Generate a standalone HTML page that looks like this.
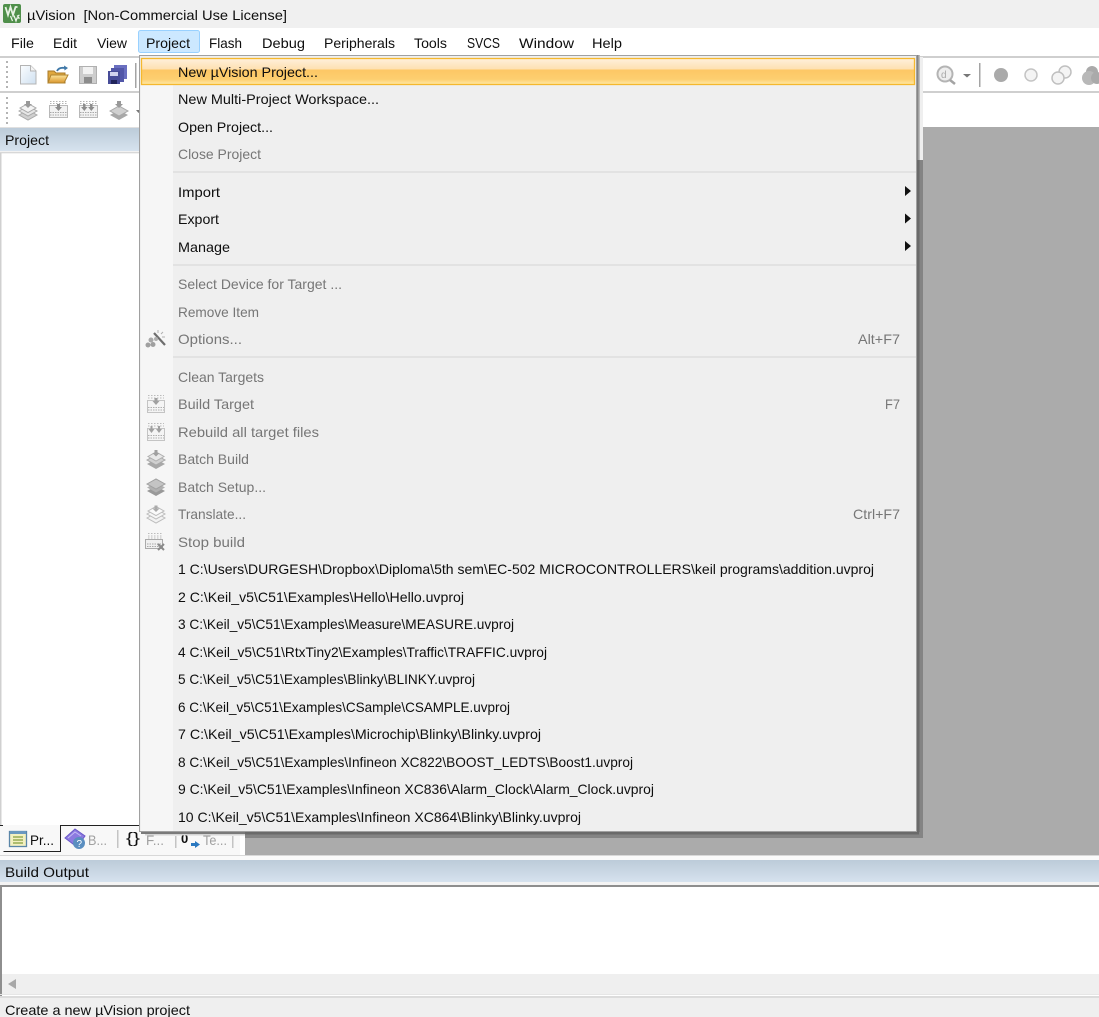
<!DOCTYPE html>
<html lang="en"><head><meta charset="utf-8"><title>µVision</title>
<style>
html,body{margin:0;padding:0;background:#fff;width:1099px;height:1017px;overflow:hidden}
svg{display:block;filter:blur(.35px)}
text{font-family:"Liberation Sans",sans-serif;font-size:14px;fill:#0e0e0e}
.d{fill:#767676}
</style></head><body>
<svg xmlns="http://www.w3.org/2000/svg" width="1099" height="1017" viewBox="0 0 1099 1017">
<defs>
<linearGradient id="hd" x1="0" y1="0" x2="0" y2="1"><stop offset="0" stop-color="#bccbd9"/><stop offset="1" stop-color="#d6e2ee"/></linearGradient>
<linearGradient id="hl" x1="0" y1="0" x2="0" y2="1"><stop offset="0" stop-color="#fff0dc"/><stop offset=".42" stop-color="#fee0b0"/><stop offset=".43" stop-color="#fdc765"/><stop offset=".8" stop-color="#fdcf70"/><stop offset="1" stop-color="#ffe9a8"/></linearGradient>
<linearGradient id="fold" x1="0" y1="0" x2="0" y2="1"><stop offset="0" stop-color="#fde59a"/><stop offset="1" stop-color="#d9952c"/></linearGradient>
<linearGradient id="doc" x1="0" y1="0" x2="1" y2="1"><stop offset="0" stop-color="#fbfdff"/><stop offset="1" stop-color="#cfe0f0"/></linearGradient>
</defs>
<!-- base -->
<rect width="1099" height="1017" fill="#fff"/>
<rect width="1099" height="28" fill="#f0f0f0"/>
<!-- title -->
<rect x="3" y="4" width="18" height="19" rx="2" fill="#4f8f4a"/>
<path d="M5.500 7l2.500 8 2.500-8 2.500 8 2.500-8 2 0" fill="none" stroke="#e8f2e4" stroke-width="1.800"/>
<path d="M12.500 21l-2-5M14 15.500l2 5.500 1-3h2l-1.500-2 2-1" fill="none" stroke="#f0f6ee" stroke-width="1.200"/>
<text x="27" y="20" textLength="260" lengthAdjust="spacingAndGlyphs" xml:space="preserve">µVision  [Non-Commercial Use License]</text>
<!-- menubar -->
<rect x="138.500" y="30.500" width="61" height="22" rx="2" fill="#cce8ff" stroke="#99d1ff"/>
<text x="11" y="48" textLength="23" lengthAdjust="spacingAndGlyphs">File</text>
<text x="53" y="48" textLength="24" lengthAdjust="spacingAndGlyphs">Edit</text>
<text x="97" y="48" textLength="30" lengthAdjust="spacingAndGlyphs">View</text>
<text x="146" y="48" textLength="44" lengthAdjust="spacingAndGlyphs">Project</text>
<text x="209" y="48" textLength="33" lengthAdjust="spacingAndGlyphs">Flash</text>
<text x="262" y="48" textLength="43" lengthAdjust="spacingAndGlyphs">Debug</text>
<text x="324" y="48" textLength="71" lengthAdjust="spacingAndGlyphs">Peripherals</text>
<text x="414" y="48" textLength="33" lengthAdjust="spacingAndGlyphs">Tools</text>
<text x="467" y="48" textLength="33" lengthAdjust="spacingAndGlyphs" style="font-size:15px">SVCS</text>
<text x="519" y="48" textLength="55" lengthAdjust="spacingAndGlyphs">Window</text>
<text x="592" y="48" textLength="30" lengthAdjust="spacingAndGlyphs">Help</text>
<!-- toolbars -->
<rect x="0" y="56" width="1099" height="2" fill="#cfcfcf"/>
<rect x="0" y="91" width="1099" height="2" fill="#cfcfcf"/>
<g fill="#b4b4b4">
<rect x="6" y="61" width="2" height="2"/><rect x="6" y="66" width="2" height="2"/><rect x="6" y="71" width="2" height="2"/><rect x="6" y="76" width="2" height="2"/><rect x="6" y="81" width="2" height="2"/><rect x="6" y="86" width="2" height="2"/>
<rect x="6" y="97" width="2" height="2"/><rect x="6" y="102" width="2" height="2"/><rect x="6" y="107" width="2" height="2"/><rect x="6" y="112" width="2" height="2"/><rect x="6" y="117" width="2" height="2"/><rect x="6" y="122" width="2" height="2"/>
</g>
<!-- toolbar 1 icons -->
<path d="M20.500 65.500h10l5.500 5.500v13h-15.500z" fill="url(#doc)" stroke="#b4b4b4"/>
<path d="M30.500 65.500v5.500h5.500" fill="#f4f4f4" stroke="#b4b4b4"/>
<path d="M48 83V71h6l2 2h9v10z" fill="#e0a83e" stroke="#a87a28"/>
<path d="M48 83l3-8h17l-4 8z" fill="url(#fold)" stroke="#b08430"/>
<path d="M57 71q2-4 8-3" fill="none" stroke="#3f78a8" stroke-width="1.800"/><path d="M64 65.500l4 2.500-3.500 2.500z" fill="#3f78a8"/>
<rect x="79.500" y="66.500" width="17" height="17" fill="#cdcdcd" stroke="#b0b0b0"/><rect x="83" y="67" width="10" height="7" fill="#f2f2f2"/><rect x="84" y="77" width="8" height="6" fill="#8c8c8c"/>
<rect x="114" y="65" width="13" height="14" fill="#6a6fc0"/><rect x="111" y="68" width="13" height="14" fill="#5257a8"/><rect x="108" y="71" width="12" height="13" fill="#474c98"/><rect x="110" y="72" width="8" height="4" fill="#d0d2ee"/><rect x="111" y="80" width="6" height="4" fill="#20245a"/>
<rect x="135" y="63" width="1.500" height="25" fill="#a4a4a4"/>
<!-- toolbar 2 icons -->
<g>
<path d="M19 115l9-5 9 5-9 5z" fill="#d0d0d0" stroke="#aaa"/><path d="M19 111l9-5 9 5-9 5z" fill="#e6e6e6" stroke="#aaa"/><path d="M20 108l8-4.500 8 4.500-8 4.500z" fill="#f4f4f4" stroke="#aaa"/><path d="M26 101h4v3h2l-4 4-4-4h2z" fill="#999"/>
</g>
<g id="bt2">
<rect x="49.500" y="105.500" width="18" height="12" fill="#f2f2f2" stroke="#b8b8b8"/>
<path d="M50 101.500h17M50 103.500h17" stroke="#b4b4b4" stroke-dasharray="1.500 1.500" fill="none"/>
<path d="M50 112.500h17M50 115h17" stroke="#a8a8a8" stroke-dasharray="1.500 1" fill="none"/>
<path d="M57 104h3v3h2l-3.500 4-3.500-4h2z" fill="#8c8c8c"/>
</g>
<g>
<rect x="79.500" y="105.500" width="18" height="12" fill="#f2f2f2" stroke="#b8b8b8"/>
<path d="M80 101.500h17M80 103.500h17" stroke="#b4b4b4" stroke-dasharray="1.500 1.500" fill="none"/>
<path d="M80 112.500h17M80 115h17" stroke="#a8a8a8" stroke-dasharray="1.500 1" fill="none"/>
<path d="M83 104h2.500v3h2l-3.200 4-3.200-4h2zM90 104h2.500v3h2l-3.200 4-3.200-4h2z" fill="#8c8c8c"/>
</g>
<path d="M110 115l9-5 9 5-9 5z" fill="#a8a8a8"/><path d="M110 111l9-5 9 5-9 5z" fill="#d0d0d0" stroke="#a8a8a8"/><path d="M117 101h4v3h2l-4 4-4-4h2z" fill="#999"/>
<path d="M136 110h5l-2.500 3z" fill="#777"/>
<!-- right toolbar icons -->
<circle cx="945" cy="74" r="7.500" fill="#eee" stroke="#b4b4b4" stroke-width="2"/>
<text x="941" y="78" style="font-size:10px;fill:#aaa">d</text>
<path d="M950 80l5 4" stroke="#a4a4a4" stroke-width="2.500"/>
<path d="M963 74h8l-4 3.500z" fill="#777"/>
<rect x="979" y="63" width="1.500" height="24" fill="#a4a4a4"/>
<circle cx="1001" cy="75" r="7" fill="#aaa"/>
<circle cx="1031" cy="75" r="6" fill="#f4f4f4" stroke="#c4c4c4" stroke-width="1.500"/>
<circle cx="1065" cy="72" r="6" fill="#f4f4f4" stroke="#c0c0c0" stroke-width="1.500"/><circle cx="1058" cy="78" r="6" fill="#f4f4f4" stroke="#c0c0c0" stroke-width="1.500"/>
<circle cx="1092" cy="72" r="6" fill="#aaa"/><circle cx="1089" cy="78" r="7" fill="#b8b8b8"/><circle cx="1097" cy="78" r="6" fill="#aaa"/>
<!-- gray client -->
<rect x="923" y="127" width="176" height="728" fill="#ababab"/>
<rect x="245" y="825" width="700" height="30" fill="#ababab"/>
<!-- project panel -->
<rect x="0" y="127" width="139" height="1" fill="#e0e0e0"/>
<rect x="0" y="128" width="139" height="23" fill="url(#hd)"/>
<text x="5" y="145" textLength="44" lengthAdjust="spacingAndGlyphs">Project</text>
<rect x="0" y="151" width="139" height="3" fill="#f2f2f2"/>
<rect x="0" y="152" width="139" height="1" fill="#d8d8d8"/>
<rect x="0" y="153" width="1.500" height="672" fill="#d0d0d0"/>
<rect x="0" y="825" width="240" height="30" fill="#f8f8f8"/>
<!-- tabs -->
<path d="M3.500 851.500H60.500V825.500H139" fill="none" stroke="#222"/>
<path d="M0 825.500h3" stroke="#222"/>
<rect x="9.500" y="831.500" width="17" height="15" fill="#f3f0c0" stroke="#5a86a8" stroke-width="1.300"/><rect x="10" y="831" width="16" height="3" fill="#6a98c0"/><path d="M13 837h10M13 840h10M13 843h10" stroke="#6a8a20"/>
<text x="30" y="845" textLength="24" lengthAdjust="spacingAndGlyphs">Pr...</text>
<path d="M65 838l10-9 10 7-8 11z" fill="#8c7ae0" stroke="#6a58c8"/><path d="M68 838l7-6 6 4" fill="none" stroke="#c4baf4"/><circle cx="79" cy="843" r="6" fill="#5a8ec0"/><text x="76.500" y="847" style="font-size:10px;fill:#fff">?</text>
<text x="88" y="845" textLength="19" lengthAdjust="spacingAndGlyphs" style="fill:#a0a0a0">B...</text>
<rect x="117" y="830" width="1.500" height="18" fill="#c4c4c4"/>
<text x="126" y="843" textLength="14" lengthAdjust="spacingAndGlyphs" style="font-size:15px">{}</text>
<text x="146" y="845" textLength="18" lengthAdjust="spacingAndGlyphs" style="fill:#a0a0a0">F...</text>
<rect x="175" y="836" width="1.500" height="12" fill="#c4c4c4"/>
<text x="181" y="843" style="font-size:13px;font-weight:bold">0</text>
<path d="M191 843h4v-2l5 3.500-5 3.500v-2h-4z" fill="#2a78c0"/>
<text x="203" y="845" textLength="24" lengthAdjust="spacingAndGlyphs" style="fill:#a0a0a0">Te...</text>
<rect x="232" y="836" width="1.500" height="12" fill="#c4c4c4"/>
<!-- menu shadow -->
<rect x="917" y="160" width="6" height="678" fill="#848484"/>
<rect x="917" y="160" width="2.500" height="674" fill="#6a6a6a"/>
<rect x="917" y="55" width="1.500" height="105" fill="#858585"/>
<rect x="918.500" y="55" width="1.500" height="105" fill="#bdbdbd"/>
<rect x="920" y="57" width="3" height="103" fill="#efefef"/>
<rect x="245" y="832" width="678" height="6" fill="#848484"/>
<rect x="245" y="832" width="674" height="2.500" fill="#6a6a6a"/>
<rect x="141" y="832" width="104" height="2" fill="#7a7a7a"/>
<rect x="145" y="834" width="100" height="1.500" fill="#d4d4d4"/>
<!-- menu -->
<rect x="139" y="55" width="778" height="777" fill="#efefef"/>
<rect x="139.500" y="55.500" width="777" height="776" fill="none" stroke="#a0a0a0"/>
<rect x="141" y="85" width="32" height="746" fill="#f6f6f6"/>
<rect x="141.500" y="58.500" width="773" height="26" fill="url(#hl)" stroke="#f5b82e" stroke-width="1.300"/>
<g fill="#e2e2e2"><rect x="173" y="171" width="743" height="2"/><rect x="173" y="264" width="743" height="2"/><rect x="173" y="356" width="743" height="2"/></g>
<text x="178" y="77" textLength="140" lengthAdjust="spacingAndGlyphs">New µVision Project...</text>
<text x="178" y="104" textLength="201" lengthAdjust="spacingAndGlyphs">New Multi-Project Workspace...</text>
<text x="178" y="132" textLength="95" lengthAdjust="spacingAndGlyphs">Open Project...</text>
<text x="178" y="159" textLength="83" lengthAdjust="spacingAndGlyphs" class="d">Close Project</text>
<text x="178" y="197" textLength="42" lengthAdjust="spacingAndGlyphs">Import</text>
<text x="178" y="224" textLength="41" lengthAdjust="spacingAndGlyphs">Export</text>
<text x="178" y="252" textLength="52" lengthAdjust="spacingAndGlyphs">Manage</text>
<path d="M905 186l6 5-6 5zM905 213.500l6 5-6 5zM905 241l6 5-6 5z" fill="#111"/>
<text x="178" y="289" textLength="164" lengthAdjust="spacingAndGlyphs" class="d">Select Device for Target ...</text>
<text x="178" y="317" textLength="81" lengthAdjust="spacingAndGlyphs" class="d">Remove Item</text>
<text x="178" y="344" textLength="64" lengthAdjust="spacingAndGlyphs" class="d">Options...</text>
<text x="858" y="344" textLength="42" lengthAdjust="spacingAndGlyphs" class="d">Alt+F7</text>
<text x="178" y="382" textLength="86" lengthAdjust="spacingAndGlyphs" class="d">Clean Targets</text>
<text x="178" y="409" textLength="76" lengthAdjust="spacingAndGlyphs" class="d">Build Target</text>
<text x="885" y="409" textLength="15" lengthAdjust="spacingAndGlyphs" class="d">F7</text>
<text x="178" y="437" textLength="141" lengthAdjust="spacingAndGlyphs" class="d">Rebuild all target files</text>
<text x="178" y="464" textLength="71" lengthAdjust="spacingAndGlyphs" class="d">Batch Build</text>
<text x="178" y="492" textLength="88" lengthAdjust="spacingAndGlyphs" class="d">Batch Setup...</text>
<text x="178" y="519" textLength="68" lengthAdjust="spacingAndGlyphs" class="d">Translate...</text>
<text x="853" y="519" textLength="47" lengthAdjust="spacingAndGlyphs" class="d">Ctrl+F7</text>
<text x="178" y="547" textLength="67" lengthAdjust="spacingAndGlyphs" class="d">Stop build</text>
<text x="178" y="574" textLength="696" lengthAdjust="spacingAndGlyphs">1 C:\Users\DURGESH\Dropbox\Diploma\5th sem\EC-502 MICROCONTROLLERS\keil programs\addition.uvproj</text>
<text x="178" y="602" textLength="286" lengthAdjust="spacingAndGlyphs">2 C:\Keil_v5\C51\Examples\Hello\Hello.uvproj</text>
<text x="178" y="629" textLength="336" lengthAdjust="spacingAndGlyphs">3 C:\Keil_v5\C51\Examples\Measure\MEASURE.uvproj</text>
<text x="178" y="657" textLength="369" lengthAdjust="spacingAndGlyphs">4 C:\Keil_v5\C51\RtxTiny2\Examples\Traffic\TRAFFIC.uvproj</text>
<text x="178" y="684" textLength="297" lengthAdjust="spacingAndGlyphs">5 C:\Keil_v5\C51\Examples\Blinky\BLINKY.uvproj</text>
<text x="178" y="712" textLength="332" lengthAdjust="spacingAndGlyphs">6 C:\Keil_v5\C51\Examples\CSample\CSAMPLE.uvproj</text>
<text x="178" y="739" textLength="363" lengthAdjust="spacingAndGlyphs">7 C:\Keil_v5\C51\Examples\Microchip\Blinky\Blinky.uvproj</text>
<text x="178" y="767" textLength="455" lengthAdjust="spacingAndGlyphs">8 C:\Keil_v5\C51\Examples\Infineon XC822\BOOST_LEDTS\Boost1.uvproj</text>
<text x="178" y="794" textLength="476" lengthAdjust="spacingAndGlyphs">9 C:\Keil_v5\C51\Examples\Infineon XC836\Alarm_Clock\Alarm_Clock.uvproj</text>
<text x="178" y="822" textLength="403" lengthAdjust="spacingAndGlyphs">10 C:\Keil_v5\C51\Examples\Infineon XC864\Blinky\Blinky.uvproj</text>
<!-- menu icons -->
<path d="M154 333l11 12" stroke="#6e6e6e" stroke-width="2.200"/>
<circle cx="148" cy="345" r="2.500" fill="#a0a0a0"/><circle cx="153" cy="344.500" r="2.500" fill="#a0a0a0"/><circle cx="151" cy="340" r="2.500" fill="#a8a8a8"/><circle cx="156" cy="339" r="2" fill="#b0b0b0"/>
<path d="M158 330v3M163 332l-2 2M165 337h-3" stroke="#b0b0b0"/>
<!-- build target -->
<rect x="147.500" y="400.500" width="17" height="12" fill="#f4f4f4" stroke="#c4c4c4"/>
<path d="M148 395.500h16M148 398h16" stroke="#bcbcbc" stroke-dasharray="1.500 1.500" fill="none"/>
<path d="M148 407.500h16M148 410h16" stroke="#b0b0b0" stroke-dasharray="1.500 1" fill="none"/>
<path d="M154.500 398h3v3h2l-3.500 4-3.500-4h2z" fill="#a0a0a0"/>
<!-- rebuild -->
<rect x="147.500" y="428.500" width="17" height="12" fill="#f4f4f4" stroke="#c4c4c4"/>
<path d="M148 423.500h16M148 426h16" stroke="#bcbcbc" stroke-dasharray="1.500 1.500" fill="none"/>
<path d="M148 435.500h16M148 438h16" stroke="#b0b0b0" stroke-dasharray="1.500 1" fill="none"/>
<path d="M150.500 426h2v3h2l-3 4-3-4h2zM158 426h2v3h2l-3 4-3-4h2z" fill="#a0a0a0"/>
<!-- batch build -->
<path d="M147 464l9-5 9 5-9 5z" fill="#a8a8a8"/><path d="M147 460l9-5 9 5-9 5z" fill="#d0d0d0" stroke="#a8a8a8"/><path d="M148 456.500l8-4.500 8 4.500-8 4.500z" fill="#e8e8e8" stroke="#b0b0b0"/><path d="M154.500 450h3v3h2l-3.500 3.500-3.500-3.500h2z" fill="#a0a0a0"/>
<!-- batch setup -->
<path d="M147 491l9-5 9 5-9 5z" fill="#999"/><path d="M147 487.500l9-5 9 5-9 5z" fill="#b0b0b0"/><path d="M147 484l9-5 9 5-9 5z" fill="#c4c4c4" stroke="#a0a0a0"/>
<!-- translate -->
<path d="M147 518l9-5 9 5-9 5z" fill="#f2f2f2" stroke="#bcbcbc"/><path d="M147 514l9-5 9 5-9 5z" fill="#f6f6f6" stroke="#bcbcbc"/><path d="M148 511l8-4.500 8 4.500-8 4.500z" fill="#fafafa" stroke="#bcbcbc"/><path d="M154.500 505.500h3v3h2l-3.500 3.500-3.500-3.500h2z" fill="#aaa"/>
<!-- stop -->
<rect x="145.500" y="539.500" width="17" height="9" fill="#f0f0f0" stroke="#aaa"/>
<path d="M148 533.500h14M148 536h14M148 538h14" stroke="#bcbcbc" stroke-dasharray="1.500 1.500" fill="none"/>
<path d="M147 544h14M147 546.500h14" stroke="#a8a8a8" stroke-dasharray="1.500 1" fill="none"/>
<path d="M158 544l6 6M164 544l-6 6" stroke="#8a8a8a" stroke-width="2"/>
<!-- build output -->
<rect x="0" y="855" width="1099" height="5" fill="#fafafa"/>
<rect x="0" y="855" width="1099" height="1" fill="#d8d8d8"/>
<rect x="0" y="860" width="1099" height="22" fill="url(#hd)"/>
<text x="5" y="877" textLength="84" lengthAdjust="spacingAndGlyphs">Build Output</text>
<rect x="0" y="882" width="1099" height="3" fill="#f4f4f4"/>
<rect x="0" y="885" width="1099" height="2" fill="#8e8e8e"/>
<rect x="0" y="887" width="2" height="109" fill="#8e8e8e"/>
<rect x="2" y="974" width="1097" height="21" fill="#efefef"/>
<path d="M16 979v10l-8-5z" fill="#a8a8a8"/>
<rect x="0" y="994" width="1099" height="1" fill="#e6e6e6"/>
<rect x="0" y="996" width="1099" height="2" fill="#dcdcdc"/>
<rect x="0" y="998" width="1099" height="19" fill="#efefef"/>
<text x="5" y="1015" textLength="185" lengthAdjust="spacingAndGlyphs">Create a new µVision project</text>
</svg>
</body></html>
